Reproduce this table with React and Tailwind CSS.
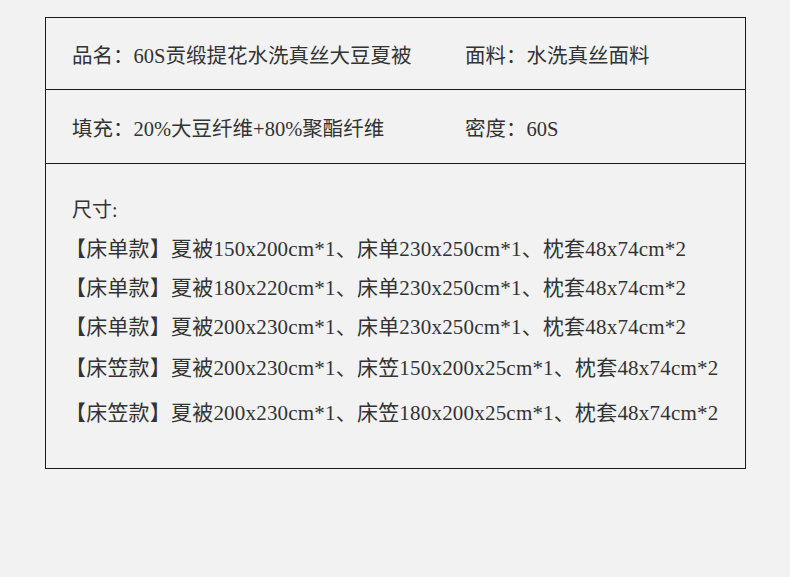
import React from "react";

const sizes = [
  ["【床单款】夏被150x200cm*1、床单230x250cm*1、枕套48x74cm*2", "-mt-[1px]"],
  ["【床单款】夏被180x220cm*1、床单230x250cm*1、枕套48x74cm*2", "-mt-[1px]"],
  ["【床单款】夏被200x230cm*1、床单230x250cm*1、枕套48x74cm*2", "-mt-[1px]"],
  ["【床笠款】夏被200x230cm*1、床笠150x200x25cm*1、枕套48x74cm*2", "mt-[1px]"],
  ["【床笠款】夏被200x230cm*1、床笠180x200x25cm*1、枕套48x74cm*2", "mt-[5px]"],
];

function Row({ left, right, className }) {
  return (
    <div className={`grid grid-cols-[393px_1fr] items-center pl-[26px] pt-[6px] text-[20.5px] ${className}`}>
      <div>{left}</div>
      <div>{right}</div>
    </div>
  );
}

export default function App() {
  return (
    <div
      className="w-[790px] h-[577px] bg-[#f2f2f2] pt-[17px] pl-[45px] text-[20px] text-[#333] leading-none"
      style={{ fontFamily: '"Liberation Serif", "Noto Sans CJK SC", serif' }}
    >
      <div className="w-[701px] h-[452px] border border-[#1a1a1a] flex flex-col">
        <Row className="h-[71px]" left="品名：60S贡缎提花水洗真丝大豆夏被" right="面料：水洗真丝面料" />
        <Row
          className="h-[74px] border-t border-[#1a1a1a]"
          left="填充：20%大豆纤维+80%聚酯纤维"
          right="密度：60S"
        />
        <div className="flex-1 border-t border-[#1a1a1a] pt-[26px] pl-[26px]">
          <div className="h-[40px] flex items-center">尺寸:</div>
          {sizes.map(([s, m], i) => (
            <div key={i} className={`h-[40px] flex items-center -ml-[7px] text-[21px] tracking-[0.2px] ${m}`}>
              {s}
            </div>
          ))}
        </div>
      </div>
    </div>
  );
}
